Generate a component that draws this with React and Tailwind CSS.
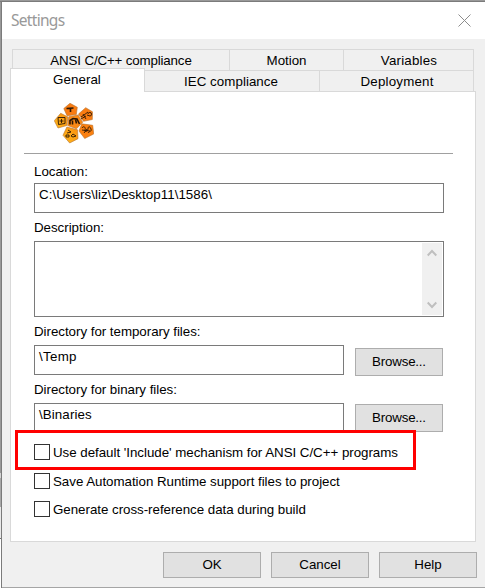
import React from 'react';

function Tab({ className = '', children }) {
  return (
    <div className={`flex justify-center border-[#d9d9d9] bg-[#f0f0f0] leading-[15px] ${className}`}>
      {children}
    </div>
  );
}

function Button({ className = '', children }) {
  return (
    <button className={`flex items-center justify-center border border-[#adadad] bg-[#e1e1e1] ${className}`}>
      {children}
    </button>
  );
}

function Field({ className = '', children }) {
  return (
    <div className={`h-[30px] border border-[#7a7a7a] bg-white pl-1 pt-[3px] leading-[15px] ${className}`}>
      {children}
    </div>
  );
}

function Check({ className = '', children }) {
  return (
    <label className={`flex h-4 items-start ${className}`}>
      <span className="mr-[3px] size-4 shrink-0 border border-[#333333] bg-white" />
      <span className="pt-px leading-4">{children}</span>
    </label>
  );
}

function Logo() {
  return (
    <svg className="ml-[43px] mt-[11px] block shrink-0" width="40" height="41" viewBox="0 0 40 41">
      <defs>
        <linearGradient id="amber" x1="0" y1="1" x2="1" y2="0">
          <stop offset="0" stopColor="#ffb91c" />
          <stop offset="1" stopColor="#fb8f10" />
        </linearGradient>
      </defs>
      <g stroke="#b5702c" strokeWidth=".6" strokeLinejoin="round">
        <path fill="#f97c12" d="M16 .3 23.300 4.300 22.300 11.500 13 12.800 9.800 5.500Z" />
        <path fill="#f97c12" d="M31.700 4.700 38.500 8.800 38.300 16.500 29.500 18.300 24.500 11Z" />
        <path fill="url(#amber)" d="M6.700 10.300 13.900 14 12.800 22.500 4 25 .3 17.700Z" />
        <path fill="#fa8915" d="M14.800 13.700 24.100 12 28.700 19.200 22.500 25.800 13.700 22.500Z" />
        <path fill="#fb8010" d="M27.800 20.800 38.700 22.300 39.700 31 30.700 35.500 25 28Z" />
        <path fill="url(#amber)" d="M12.900 24 23.500 26.800 24 35.700 15.700 40 9 32.300Z" />
      </g>
      <g fill="none" stroke="#2b1705" strokeWidth=".9">
        <path strokeWidth="1.600" d="M12.500 5.500 19.500 5M16.500 5.500v3.500" />
        <path d="m27 14 3-2 4-3M29 11l3 5m-5 0 5-3m2-2a1.800 1.800 0 1 1 2 2l-3-1" />
        <path d="M4 14.500 11 14.500V20.500L4.500 21.500ZM5.500 18h4m-2-2v4" />
        <path strokeWidth="1.600" d="M16 21.500v-4l3-2 4 .5 2.500 5M18.500 17.500v4M21.500 16.500l1 4" />
        <path d="M28 25c2-3 4 0 3 2s3 2 3-1 2-3 3 0-2 2-3 4M28 27l8 1M30 30l3-4" />
        <path d="m14 27 3 2-4 1m-1 4h3v-2h-3Zm5-1 2-2 3 2-3 1Z" />
      </g>
    </svg>
  );
}

export default function App() {
  return (
    <div
      className="relative flex h-[588px] w-[485px] flex-col overflow-hidden bg-[#8f8f8f] text-[13.33px] tracking-[-0.03px] text-black"
      style={{ fontFamily: '"Liberation Sans", Arial, sans-serif' }}
    >
      <div className="h-0.5 shrink-0 border-b border-[#7b7b7b] bg-[#999999]" />
      <div className="flex min-h-0 flex-1">
        <div className="flex w-0.5 shrink-0 flex-col border-r border-[#7b7b7b] bg-[#999999]">
          <div className="mt-[471px] h-[5px] bg-[#d5d5d5]" />
          <div className="h-[29px] bg-[#a8a8a8]" />
          <div className="h-[32px] border-b border-[#777777] bg-[#e9e9e9]" />
          <div className="flex-1 bg-white" />
        </div>
        <div className="flex w-[483px] flex-col border-b border-[#a5a5a5] bg-[#f0f0f0]">
          <header className="flex h-[37px] shrink-0 items-center justify-between bg-white pl-[9px] pr-[14px]">
            <span
              className="text-[15.5px] tracking-[-0.7px] text-[#999999]"
              style={{ fontFamily: '"Noto Sans", "Open Sans", sans-serif' }}
            >
              Settings
            </span>
            <svg width="13" height="13" viewBox="0 0 13 13" stroke="#8c8c8c" strokeWidth="1">
              <path d="M.5.5 12.500 12.500M12.500.5.5 12.500" />
            </svg>
          </header>

          <div className="ml-2 mt-[10px] w-[466px] shrink-0">
            <div className="ml-0.5 flex h-[21px] w-[462px]">
              <Tab className="w-[217px] border-l border-t pt-[3px] tracking-[-0.15px]">ANSI C/C++ compliance</Tab>
              <Tab className="w-[114px] border-l border-t pt-[3px]">Motion</Tab>
              <Tab className="w-[131px] border-x border-t pl-px pt-[3px] tracking-[0.2px]">Variables</Tab>
            </div>
            <div className="flex h-[22px] items-end">
              <Tab className="relative z-10 -mt-0.5 h-[24px] w-[135px] border-x border-t !bg-white pr-px pt-[3px] tracking-[0.05px]">General</Tab>
              <Tab className="h-[22px] w-[174px] border-b border-t pr-0.5 pt-[3px] tracking-[0.05px]">IEC compliance</Tab>
              <Tab className="h-[22px] w-[155px] border border-[#d9d9d9] pl-px pt-[3px] tracking-[0.2px]">Deployment</Tab>
              <div className="h-px w-0.5 bg-[#d9d9d9]" />
            </div>

            <main className="flex h-[450px] flex-col border-x border-b border-[#d9d9d9] bg-white">
              <Logo />
              <div className="ml-[13px] mt-[9px] h-px w-[429px] shrink-0 bg-[#a0a0a0]" />
              <div className="ml-[23px] flex w-[410px] flex-col">
                <div className="mt-[10px] h-[15px] leading-[15px]">Location:</div>
                <Field className="mt-1 w-[410px] tracking-[0.05px]">C:\Users\liz\Desktop11\1586\</Field>
                <div className="mt-[7px] h-[15px] leading-[15px]">Description:</div>
                <div className="mt-[6px] flex h-[76px] w-[410px] justify-end border border-[#7a7a7a] p-px">
                  <div className="flex w-[20px] flex-col items-center justify-between bg-[#f0f0f0] py-[6px]">
                    <svg width="10" height="8" viewBox="0 0 10 8" fill="none" stroke="#bfbfbf" strokeWidth="2">
                      <path d="m.7 6.500 4.300-4.500 4.300 4.500" />
                    </svg>
                    <svg width="10" height="8" viewBox="0 0 10 8" fill="none" stroke="#bfbfbf" strokeWidth="2">
                      <path d="m.7 1.500 4.300 4.500 4.300-4.500" />
                    </svg>
                  </div>
                </div>
                <div className="mt-[7px] h-[15px] leading-[15px]">Directory for temporary files:</div>
                <div className="mt-[6px] flex h-[30px] items-start">
                  <Field className="w-[310px] tracking-[0.3px]">\Temp</Field>
                  <Button className="ml-[11px] mt-[3px] h-7 w-[88px] tracking-[-0.2px]">Browse...</Button>
                </div>
                <div className="mt-[7px] h-[15px] leading-[15px]">Directory for binary files:</div>
                <div className="mt-[6px] flex h-[30px] items-start">
                  <Field className="w-[310px] tracking-[0.1px]">\Binaries</Field>
                  <Button className="ml-[11px] mt-px h-7 w-[88px] tracking-[-0.2px]">Browse...</Button>
                </div>
                <Check className="mt-[11px]">Use default 'Include' mechanism for ANSI C/C++ programs</Check>
                <Check className="mt-[13px]">Save Automation Runtime support files to project</Check>
                <Check className="mt-3">Generate cross-reference data during build</Check>
              </div>
            </main>
          </div>

          <footer className="mt-[10px] flex justify-end gap-[10px] pr-2">
            <Button className="h-[26px] w-[98px]">OK</Button>
            <Button className="h-[26px] w-[98px]">Cancel</Button>
            <Button className="h-[26px] w-[98px]">Help</Button>
          </footer>
        </div>
      </div>
      <div className="pointer-events-none absolute left-[15px] top-[430px] h-[40px] w-[401px] border-[3px] border-[#ff0000]" />
    </div>
  );
}
